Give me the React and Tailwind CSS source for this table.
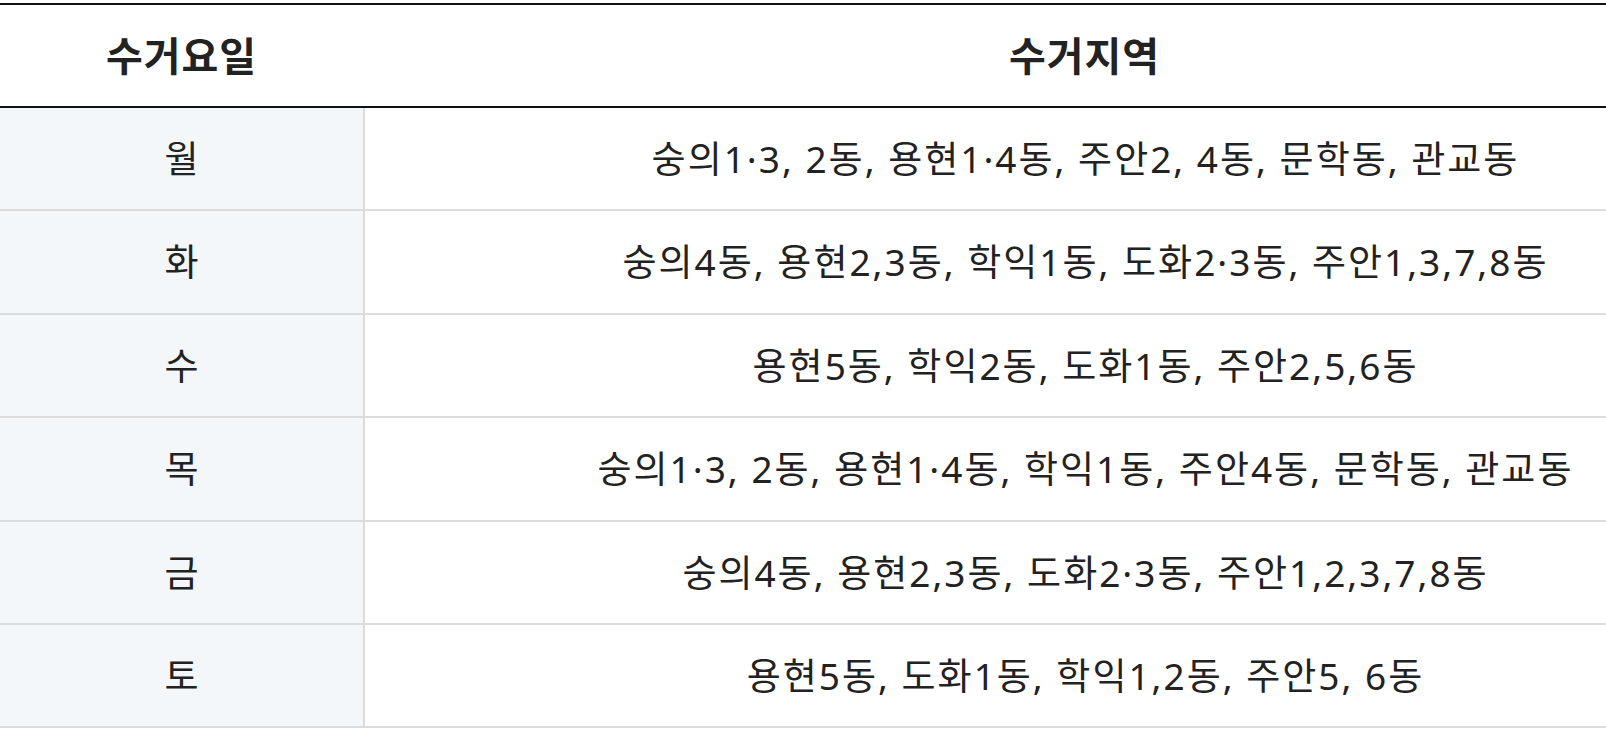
import React from "react";

const rows = [
  ["월", "숭의1·3, 2동, 용현1·4동, 주안2, 4동, 문학동, 관교동"],
  ["화", "숭의4동, 용현2,3동, 학익1동, 도화2·3동, 주안1,3,7,8동"],
  ["수", "용현5동, 학익2동, 도화1동, 주안2,5,6동"],
  ["목", "숭의1·3, 2동, 용현1·4동, 학익1동, 주안4동, 문학동, 관교동"],
  ["금", "숭의4동, 용현2,3동, 도화2·3동, 주안1,2,3,7,8동"],
  ["토", "용현5동, 도화1동, 학익1,2동, 주안5, 6동"],
];

export default function App() {
  return (
    <div className="w-[1606px] h-[732px] overflow-hidden bg-white">
      <div
        className="w-[1806px] pt-[3px] text-[#222] text-[37px]"
        style={{ fontFamily: '"Noto Sans", "Noto Sans CJK KR", sans-serif' }}
      >
        <div className="flex h-[105px] border-t-2 border-b-2 border-[#111] font-bold text-[40px] tracking-[1px]">
          <div className="w-[363px] flex items-center justify-center">수거요일</div>
          <div className="flex-1 flex items-center justify-center">수거지역</div>
        </div>
        {rows.map(([d, t]) => (
          <div key={d} className="flex h-[103.4px] border-b-2 border-[#dcdcdc]">
            <div className="w-[365px] flex items-center justify-center bg-[#f3f7fa] border-r-2 border-[#dcdcdc]">
              {d}
            </div>
            <div className="flex-1 flex items-center justify-center whitespace-nowrap tracking-[2px]">{t}</div>
          </div>
        ))}
      </div>
    </div>
  );
}
